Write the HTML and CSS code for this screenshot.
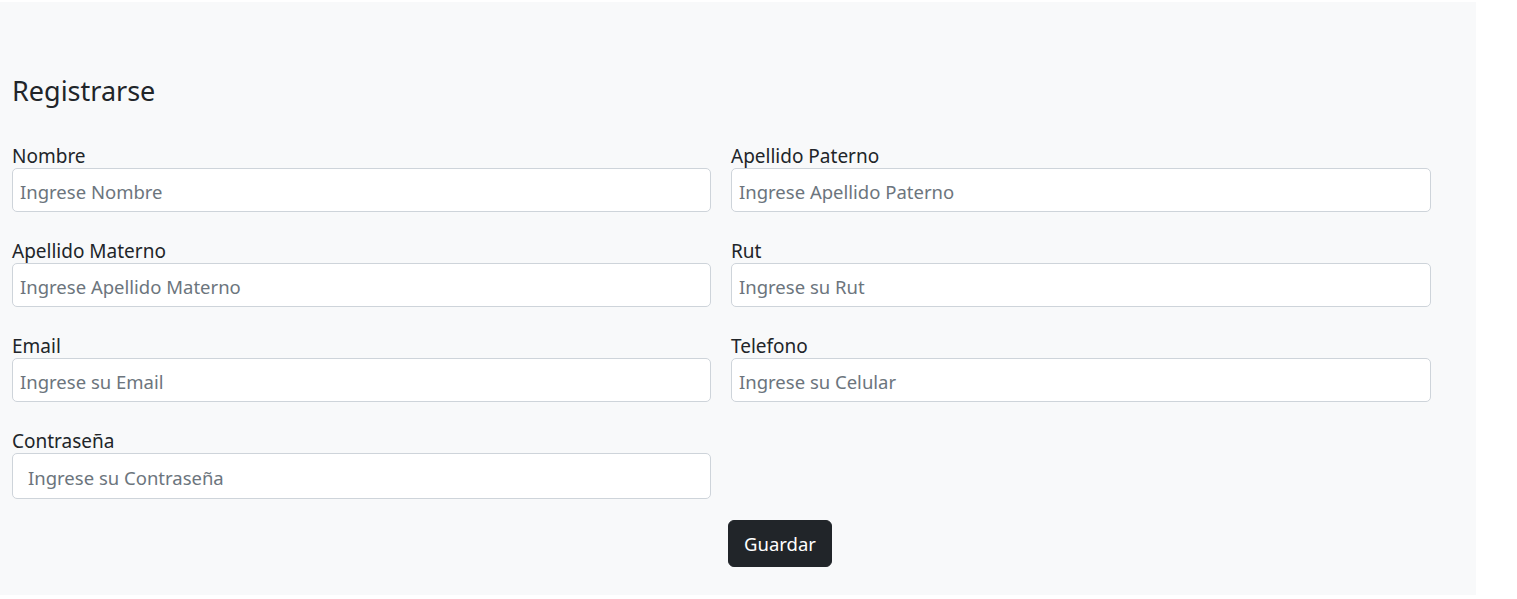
FILE: index.html
```html
<!DOCTYPE html>
<html lang="es">
<head>
<meta charset="utf-8">
<title>Registrarse</title>
<link rel="stylesheet" href="styles.css">
</head>
<body>
<div class="panel">
  <h3 class="title">Registrarse</h3>
  <form class="form">
    <div class="grid">
      <div class="field">
        <label class="label" for="nombre">Nombre</label>
        <input class="input" id="nombre" type="text" placeholder="Ingrese Nombre">
      </div>
      <div class="field">
        <label class="label" for="paterno">Apellido Paterno</label>
        <input class="input" id="paterno" type="text" placeholder="Ingrese Apellido Paterno">
      </div>
      <div class="field">
        <label class="label" for="materno">Apellido Materno</label>
        <input class="input" id="materno" type="text" placeholder="Ingrese Apellido Materno">
      </div>
      <div class="field">
        <label class="label" for="rut">Rut</label>
        <input class="input" id="rut" type="text" placeholder="Ingrese su Rut">
      </div>
      <div class="field">
        <label class="label" for="email">Email</label>
        <input class="input" id="email" type="text" placeholder="Ingrese su Email">
      </div>
      <div class="field">
        <label class="label" for="tel">Telefono</label>
        <input class="input" id="tel" type="text" placeholder="Ingrese su Celular">
      </div>
      <div class="field">
        <label class="label" for="pass">Contraseña</label>
        <input class="input input-pass" id="pass" type="password" placeholder="Ingrese su Contraseña">
      </div>
    </div>
    <div class="actions">
      <button class="btn" type="button">Guardar</button>
    </div>
  </form>
</div>
</body>
</html>
```

FILE: styles.css
```css
html, body {
  margin: 0;
  padding: 0;
  background: #ffffff;
}

body {
  font-family: "Noto Sans", "Open Sans", sans-serif;
  color: #212529;
  padding-top: 2px;
}

.panel {
  width: 1476px;
  height: 593px;
  box-sizing: border-box;
  background: #f8f9fa;
  padding: 73px 12px 0 12px;
}

.title {
  margin: 0 0 33px 0;
  font-size: 27px;
  font-weight: 400;
  line-height: 1.2;
}

.form {
  margin: 0;
}

.grid {
  display: grid;
  grid-template-columns: 699px 700px;
  column-gap: 20px;
  row-gap: 23.67px;
}

.field {
  display: flex;
  flex-direction: column;
}

.label {
  font-size: 19px;
  line-height: 24px;
  padding-top: 3.5px;
}

.input {
  box-sizing: border-box;
  height: 44px;
  padding: 3px 7px 0;
  font-family: inherit;
  font-size: 18.5px;
  color: #212529;
  background: #ffffff;
  border: 1px solid #ced4da;
  border-radius: 5px;
  outline: none;
}

.input::placeholder {
  color: #6c757d;
  opacity: 1;
}

.input-pass {
  height: 46px;
  padding: 3px 15px 0;
}

.actions {
  display: flex;
  padding-left: 716px;
  margin-top: 21px;
}

.btn {
  box-sizing: border-box;
  height: 47px;
  padding: 0 15px;
  font-family: inherit;
  font-size: 18.5px;
  line-height: 1.5;
  color: #ffffff;
  background: #212529;
  border: 1px solid #212529;
  border-radius: 6px;
  cursor: pointer;
}
```
